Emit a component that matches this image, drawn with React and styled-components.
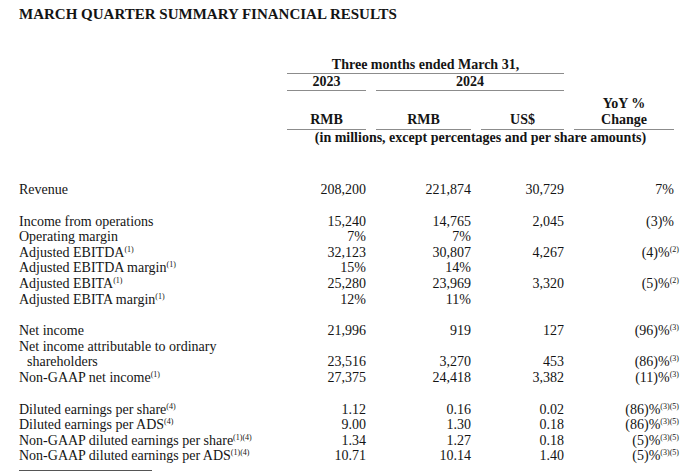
import React from 'react';
import styled, { createGlobalStyle } from 'styled-components';

const COLS = '258px 79px 95px 83px 100px';

const GlobalStyle = createGlobalStyle`
  html, body {
    margin: 0;
    padding: 0;
    background: #ffffff;
  }
  body {
    font-family: "Liberation Serif", "Times New Roman", serif;
    color: #141414;
  }
`;

const Page = styled.div`
  width: 684px;
  height: 476px;
  box-sizing: border-box;
  padding: 6px 8px 0 19px;
  overflow: hidden;
`;

const Title = styled.h1`
  margin: 0;
  font-size: 15px;
  line-height: 17px;
  font-weight: bold;
`;

const Head = styled.div`
  display: grid;
  grid-template-columns: ${COLS};
  column-gap: 10px;
  margin-top: 34px;
  font-size: 14px;
  font-weight: bold;
`;

const HeadCell = styled.div`
  grid-column: ${(p) => p.$from} / ${(p) => p.$to || p.$from + 1};
  text-align: center;
  line-height: ${(p) => p.$lh || 15}px;
  align-self: end;
  white-space: nowrap;
  margin-top: ${(p) => p.$mt || 0}px;
  border-bottom: ${(p) => (p.$line ? '1.5px solid #8c8c8c' : 'none')};
  padding-bottom: ${(p) => (p.$line ? 1 : 0)}px;
`;

const Body = styled.div`
  margin-top: 37px;
  font-size: 14px;
`;

const Row = styled.div`
  display: grid;
  grid-template-columns: ${COLS};
  column-gap: 10px;
  line-height: 15.6px;
  margin-top: ${(p) => (p.$gap ? 16 : 0)}px;
`;

const Label = styled.div`
  white-space: nowrap;
  padding-left: ${(p) => (p.$indent ? 8 : 0)}px;
`;

const Num = styled.div`
  text-align: right;
  white-space: nowrap;
`;

const Sup = styled.sup`
  font-size: 8px;
  line-height: 0;
  vertical-align: 0;
  position: relative;
  top: -5px;
  margin-right: ${(p) => (p.$hang ? -5 : 0)}px;
`;

const FootRule = styled.div`
  width: 133px;
  margin-top: 6px;
  border-top: 1px solid #555;
`;

const rows = [
  { label: 'Revenue', v: ['208,200', '221,874', '30,729', '7%'] },
  { label: 'Income from operations', v: ['15,240', '14,765', '2,045', '(3)%'], gap: true },
  { label: 'Operating margin', v: ['7%', '7%', '', ''] },
  { label: 'Adjusted EBITDA', sup: '(1)', v: ['32,123', '30,807', '4,267', '(4)%'], vs: '(2)' },
  { label: 'Adjusted EBITDA margin', sup: '(1)', v: ['15%', '14%', '', ''] },
  { label: 'Adjusted EBITA', sup: '(1)', v: ['25,280', '23,969', '3,320', '(5)%'], vs: '(2)' },
  { label: 'Adjusted EBITA margin', sup: '(1)', v: ['12%', '11%', '', ''] },
  { label: 'Net income', v: ['21,996', '919', '127', '(96)%'], vs: '(3)', gap: true },
  { label: 'Net income attributable to ordinary', v: ['', '', '', ''] },
  { label: 'shareholders', indent: true, v: ['23,516', '3,270', '453', '(86)%'], vs: '(3)' },
  { label: 'Non-GAAP net income', sup: '(1)', v: ['27,375', '24,418', '3,382', '(11)%'], vs: '(3)' },
  { label: 'Diluted earnings per share', sup: '(4)', v: ['1.12', '0.16', '0.02', '(86)%'], vs: '(3)(5)', gap: true },
  { label: 'Diluted earnings per ADS', sup: '(4)', v: ['9.00', '1.30', '0.18', '(86)%'], vs: '(3)(5)' },
  { label: 'Non-GAAP diluted earnings per share', sup: '(1)(4)', v: ['1.34', '1.27', '0.18', '(5)%'], vs: '(3)(5)' },
  { label: 'Non-GAAP diluted earnings per ADS', sup: '(1)(4)', v: ['10.71', '10.14', '1.40', '(5)%'], vs: '(3)(5)' },
];

export default function App() {
  return (
    <>
      <GlobalStyle />
      <Page>
        <Title>MARCH QUARTER SUMMARY FINANCIAL RESULTS</Title>

        <Head>
          <HeadCell $from={2} $to={5} $line>Three months ended March 31,</HeadCell>
          <HeadCell $from={2} $line>2023</HeadCell>
          <HeadCell $from={3} $to={5} $line>2024</HeadCell>
          <HeadCell $from={2} $line $lh={16}>RMB</HeadCell>
          <HeadCell $from={3} $line $lh={16}>RMB</HeadCell>
          <HeadCell $from={4} $line $lh={16}>US$</HeadCell>
          <HeadCell $from={5} $line $lh={16} $mt={5}>
            YoY %<br />Change
          </HeadCell>
          <HeadCell $from={2} $to={6}>
            (in millions, except percentages and per share amounts)
          </HeadCell>
        </Head>

        <Body>
          {rows.map((r, i) => (
            <Row key={i} $gap={r.gap}>
              <Label $indent={r.indent}>
                {r.label}
                {r.sup && <Sup>{r.sup}</Sup>}
              </Label>
              <Num>{r.v[0]}</Num>
              <Num>{r.v[1]}</Num>
              <Num>{r.v[2]}</Num>
              <Num>
                {r.v[3]}
                {r.vs && <Sup $hang>{r.vs}</Sup>}
              </Num>
            </Row>
          ))}
          <FootRule />
        </Body>
      </Page>
    </>
  );
}
